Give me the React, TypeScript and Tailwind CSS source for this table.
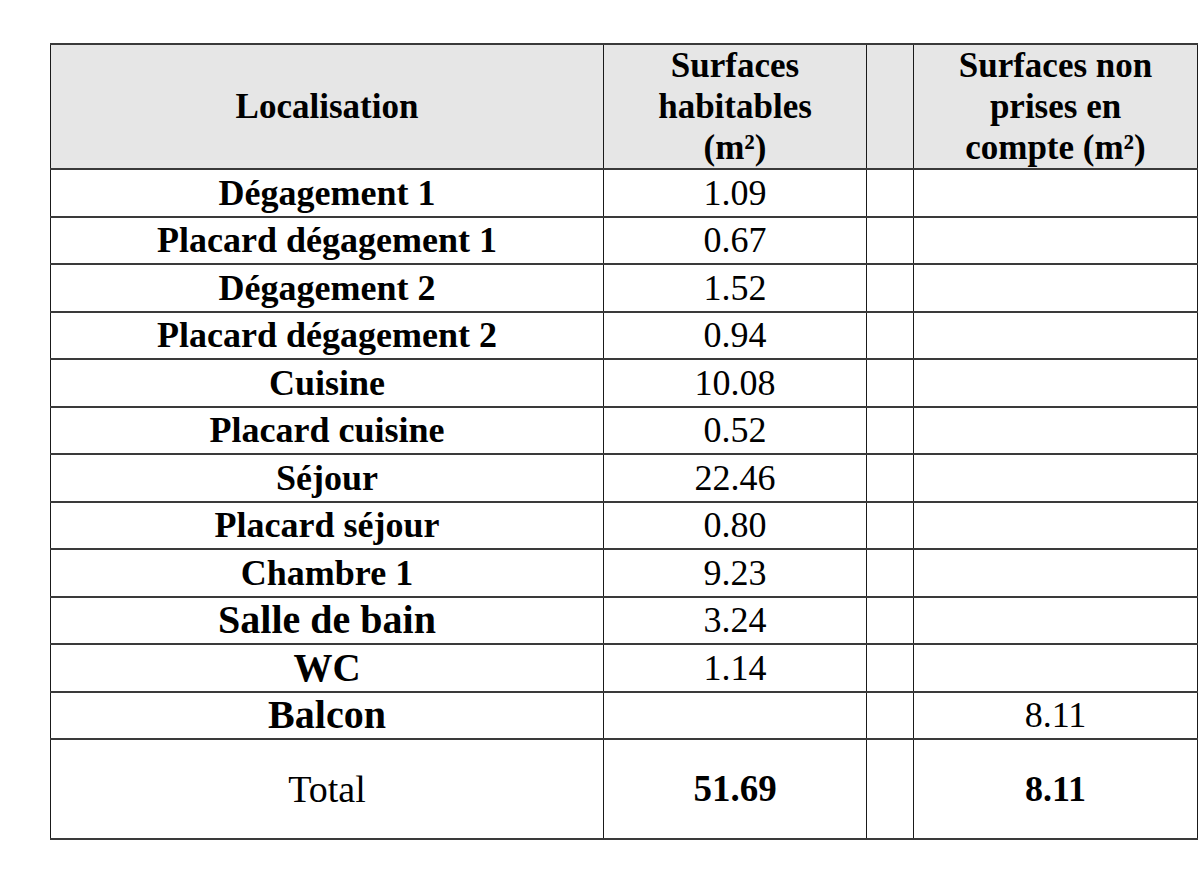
import React from "react"

type Row = {
  label: string
  size?: string
  habitable?: string
  nonPrises?: string
}

const rows: Row[] = [
  { label: "Dégagement 1", habitable: "1.09" },
  { label: "Placard dégagement 1", habitable: "0.67" },
  { label: "Dégagement 2", habitable: "1.52" },
  { label: "Placard dégagement 2", habitable: "0.94" },
  { label: "Cuisine", habitable: "10.08" },
  { label: "Placard cuisine", habitable: "0.52" },
  { label: "Séjour", habitable: "22.46" },
  { label: "Placard séjour", habitable: "0.80" },
  { label: "Chambre 1", habitable: "9.23" },
  { label: "Salle de bain", size: "text-[40px]", habitable: "3.24" },
  { label: "WC", size: "text-[39px]", habitable: "1.14" },
  { label: "Balcon", size: "text-[40px]", nonPrises: "8.11" },
]

const cell =
  "border-x-[1.5px] border-y-2 border-x-[#1a1a1a] border-y-[#3a3a3a] p-0 text-center align-middle font-['Liberation_Serif','Times_New_Roman','DejaVu_Serif',serif]"

export default function App() {
  return (
    <div className="min-h-[878px] w-[1199px] bg-white pl-[50px] pt-[43px] font-['Liberation_Serif','Times_New_Roman','DejaVu_Serif',serif] text-black">
      <table className="w-[1147px] table-fixed border-collapse">
        <colgroup>
          <col className="w-[553px]" />
          <col className="w-[263px]" />
          <col className="w-[47px]" />
          <col className="w-[284px]" />
        </colgroup>
        <thead>
          <tr className="h-[121px] bg-[#e6e6e6]">
            <th className={`${cell} text-[35px] font-bold leading-[41px]`}>Localisation</th>
            <th className={`${cell} text-[35px] font-bold leading-[41px]`}>
              Surfaces
              <br />
              habitables
              <br />
              (m²)
            </th>
            <th className={cell}></th>
            <th className={`${cell} text-[35px] font-bold leading-[41px]`}>
              Surfaces non
              <br />
              prises en
              <br />
              compte (m²)
            </th>
          </tr>
        </thead>
        <tbody>
          {rows.map((r) => (
            <tr key={r.label} className="h-[47.5px]">
              <td className={`${cell} ${r.size ?? "text-[36px]"} font-bold leading-[44px]`}>{r.label}</td>
              <td className={`${cell} text-[36px] leading-[44px]`}>{r.habitable}</td>
              <td className={cell}></td>
              <td className={`${cell} text-[36px] leading-[44px]`}>{r.nonPrises}</td>
            </tr>
          ))}
          <tr className="h-[100px]">
            <td className={`${cell} text-[38px] leading-[44px]`}>Total</td>
            <td className={`${cell} text-[37px] font-bold leading-[44px]`}>51.69</td>
            <td className={cell}></td>
            <td className={`${cell} text-[36px] font-bold leading-[44px]`}>8.11</td>
          </tr>
        </tbody>
      </table>
    </div>
  )
}
